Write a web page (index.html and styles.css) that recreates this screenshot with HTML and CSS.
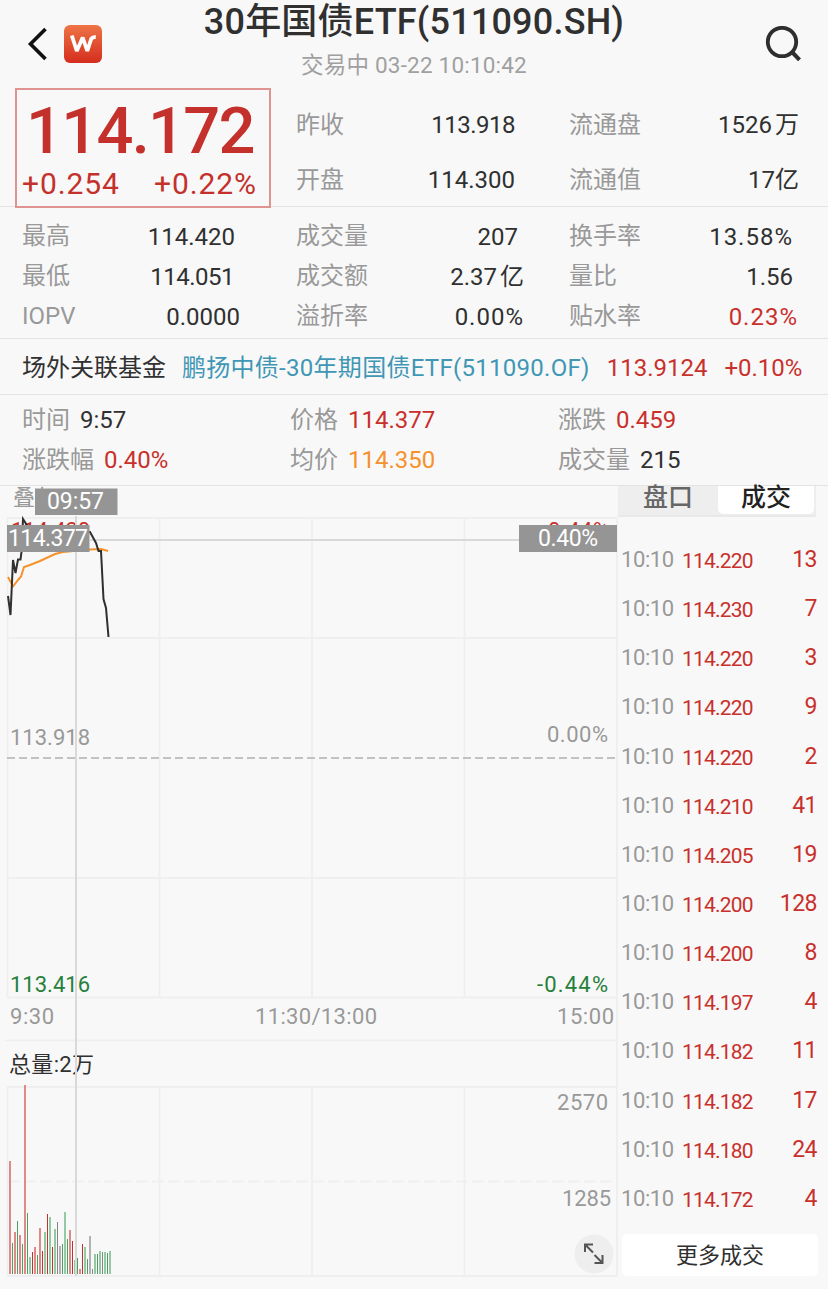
FILE: index.html
```html
<!DOCTYPE html>
<html lang="zh-CN">
<head>
    <meta charset="UTF-8">
    <meta name="viewport" content="width=device-width, initial-scale=1.0">
    <title>30年国债ETF(511090.SH)</title>
    <link rel="stylesheet" href="styles.css">
</head>
<body>
    <header class="header">
        <div class="header-left">
            <svg width="20" height="34" viewBox="0 0 20 34"><path d="M18.500 2 3.500 17l15 15" fill="none" stroke="#111" stroke-width="3.600"/></svg>
            <svg width="38" height="38" viewBox="0 0 38 38">
                <defs>
                    <linearGradient id="logo-bg" x1="0" y1="0" x2="0" y2="1">
                        <stop offset="0" stop-color="#ee7446"/>
                        <stop offset="1" stop-color="#d42d1e"/>
                    </linearGradient>
                </defs>
                <rect width="38" height="38" rx="6" fill="url(#logo-bg)"/>
                <path d="M7.800 10.500 12.800 26 18.700 12.500 23.300 26 27 14.500Q27.900 12 31.800 12.200" fill="none" stroke="#fff" stroke-width="3.800" stroke-linejoin="bevel"/>
            </svg>
        </div>
        <div class="header-title">
            <h1>30年国债ETF(511090.SH)</h1>
            <p>交易中 03-22 10:10:42</p>
        </div>
        <svg class="search" width="40" height="40" viewBox="0 0 40 40"><circle cx="18" cy="16" r="14.200" fill="none" stroke="#2e2e2e" stroke-width="3.800"/><path d="m28 26 7.500 7.800" stroke="#2e2e2e" stroke-width="4"/></svg>
    </header>

    <section class="summary">
        <div class="price-box">
            <div class="price">114.172</div>
            <div class="change"><span>+0.254</span><span>+0.22%</span></div>
        </div>
        <div class="quotes">
            <span class="label">昨收</span><span class="value tight">113.918</span>
            <span class="label">流通盘</span><span class="value">1526<i>万</i></span>
            <span class="label">开盘</span><span class="value">114.300</span>
            <span class="label">流通值</span><span class="value">17亿</span>
        </div>
    </section>

    <section class="stats">
        <span class="label">最高</span><span class="value in-5">114.420</span>
        <span class="label">成交量</span><span class="value in-6">207</span>
        <span class="label">换手率</span><span class="value in-5 wide">13.58%</span>
        <span class="label">最低</span><span class="value in-6 tight">114.051</span>
        <span class="label">成交额</span><span class="value">2.37<i>亿</i></span>
        <span class="label">量比</span><span class="value in-5">1.56</span>
        <span class="label">IOPV</span><span class="value">0.0000</span>
        <span class="label">溢折率</span><span class="value wide">0.00%</span>
        <span class="label">贴水率</span><span class="value wide red">0.23%</span>
    </section>

    <section class="fund">
        <span>场外关联基金</span>
        <a class="fund-name">鹏扬中债-30年期国债ETF(511090.OF)</a>
        <span class="red">113.9124</span>
        <span class="red">+0.10%</span>
    </section>

    <section class="detail">
        <div><span class="label">时间</span><span>9:57</span></div>
        <div><span class="label">价格</span><span class="red">114.377</span></div>
        <div><span class="label">涨跌</span><span class="red">0.459</span></div>
        <div><span class="label">涨跌幅</span><span class="red">0.40%</span></div>
        <div><span class="label">均价</span><span class="orange">114.350</span></div>
        <div><span class="label">成交量</span><span>215</span></div>
    </section>

    <main class="main">
        <svg class="chart" width="618" height="803" viewBox="0 486 618 803">
            <!-- grid -->
            <g class="grid">
                <path d="M7.500 517V997M617 517V1276M7.500 1087V1276M5 1040.500H617"/>
                <path d="M7 518H617M7 638H617M7 878H617M7 997.500H617M159.500 518V997M312 518V997M464.500 518V997"/>
                <path d="M7 1087H617M7 1276H617M159.500 1087V1276M312 1087V1276M464.500 1087V1276"/>
                <path d="M8 1181.500H617" stroke-dasharray="12 4"/>
            </g>
            <path d="M7 758H617" stroke="#c2c2c2" stroke-width="2" stroke-dasharray="8 4"/>

            <g class="axis">
                <text x="13" y="505" textLength="46">叠加</text>
                <text class="red" x="11" y="538" textLength="79">114.420</text>
                <text class="red" x="548" y="538" textLength="61">0.44%</text>
                <text x="10" y="745" textLength="80">113.918</text>
                <text x="547" y="742" textLength="61">0.00%</text>
                <text class="green" x="10" y="992" textLength="80">113.416</text>
                <text class="green" x="537" y="992" textLength="71">-0.44%</text>
                <text x="10" y="1024" textLength="44">9:30</text>
                <text x="255" y="1024" textLength="122">11:30/13:00</text>
                <text x="557" y="1024" textLength="57">15:00</text>
                <text class="dark" x="9" y="1072" textLength="85">总量:2万</text>
                <text x="557" y="1110" textLength="51">2570</text>
                <text x="562" y="1206" textLength="49">1285</text>
            </g>

            <g id="volume"></g>

            <!-- crosshair -->
            <path d="M76 516V1276" stroke="#d9d9d9" stroke-width="2"/>
            <path d="M90 540H519" stroke="#d9d9d9" stroke-width="2"/>

            <!-- average and price lines -->
            <path d="M8 577 13 586.500 18 580 21 576.500 24 567 30 565 40 561 55 554 63 552 90 549.500 101 549 108 551" fill="none" stroke="#f5922b" stroke-width="2"/>
            <path d="M8 596 10.500 615 13 560 15.500 573 18 559.500H20.500L21.500 552 23 519 30 530 50 534 75 531 90 532 96 543 98.500 551H101L103.500 599 106 608 108.500 637" fill="none" stroke="#303030" stroke-width="2"/>

            <g class="tags">
                <rect x="35" y="488.500" width="82.500" height="26.500"/>
                <rect x="7" y="525" width="82.500" height="27"/>
                <rect x="519" y="525" width="98" height="27"/>
                <text x="47" y="509" textLength="57">09:57</text>
                <text x="8" y="546" textLength="80">114.377</text>
                <text x="538" y="546" textLength="60">0.40%</text>
            </g>

            <!-- full screen -->
            <circle cx="594" cy="1254" r="19.500" fill="#eee"/>
            <path d="M585 1252v-7.500h8M585 1244.500l8 8M602.500 1255v8h-8M602.500 1263l-8-8" fill="none" stroke="#555" stroke-width="2"/>
        </svg>

        <aside class="side">
            <div class="tabs"><span>盘口</span><span class="active">成交</span></div>
            <div class="trades">
                <div><span>10:10</span><b>114.220</b><em>13</em></div>
                <div><span>10:10</span><b>114.230</b><em>7</em></div>
                <div><span>10:10</span><b>114.220</b><em>3</em></div>
                <div><span>10:10</span><b>114.220</b><em>9</em></div>
                <div><span>10:10</span><b>114.220</b><em>2</em></div>
                <div><span>10:10</span><b>114.210</b><em>41</em></div>
                <div><span>10:10</span><b>114.205</b><em>19</em></div>
                <div><span>10:10</span><b>114.200</b><em>128</em></div>
                <div><span>10:10</span><b>114.200</b><em>8</em></div>
                <div><span>10:10</span><b>114.197</b><em>4</em></div>
                <div><span>10:10</span><b>114.182</b><em>11</em></div>
                <div><span>10:10</span><b>114.182</b><em>17</em></div>
                <div><span>10:10</span><b>114.180</b><em>24</em></div>
                <div><span>10:10</span><b>114.172</b><em>4</em></div>
            </div>
            <button class="more">更多成交</button>
        </aside>
    </main>

    <script>
        // r = up, g = down, n = flat
        const volumes = 'r113 g31 r42 g53 r39 g30 r189 g61 g17 r22 r27 g19 r46 r23 g42 r60 g57 r27 g45 n52 n28 g30 g62 g35 r44 r33 g14 g16 r5 r30 g27 g15 n38 n5 g20 g20 g23 n22 g22 g21 g23'.split(' ');
        const colors = {
            r: ['#df8a87', '#c5312c'],
            g: ['#93caa4', '#4c9e62'],
            n: ['#b2b2b2', '#858585']
        };
        const group = document.getElementById('volume');

        volumes.forEach((item, i) => {
            const bar = document.createElementNS('http://www.w3.org/2000/svg', 'rect');
            const height = Number(item.slice(1));
            bar.setAttribute('x', 9 + Math.ceil(i * 2.5));
            bar.setAttribute('y', 1274 - height);
            bar.setAttribute('width', i % 2 ? 1 : 2);
            bar.setAttribute('height', height);
            bar.setAttribute('fill', colors[item[0]][i % 2]);
            group.appendChild(bar);
        });
    </script>
</body>
</html>
```
FILE: styles.css
```css
* {
    box-sizing: border-box;
}
body {
    margin: 0;
    width: 828px;
    height: 1289px;
    overflow: hidden;
    background: #f8f8f8;
    color: #303030;
    font-family: Roboto, "Noto Sans CJK SC", sans-serif;
    font-size: 24px;
}
h1, p {
    margin: 0;
}
i, em {
    font-style: normal;
}
.label {
    color: #999;
}
.red {
    color: #c9302c;
}
.orange {
    color: #f5922b;
}
.header {
    display: grid;
    grid-template-columns: 120px 1fr 120px;
    height: 88px;
}
.header-left {
    display: flex;
    align-items: center;
    gap: 17px;
    padding-left: 27px;
}
.header-title {
    text-align: center;
}
.header-title h1 {
    font-size: 36px;
    font-weight: 500;
    line-height: 44px;
    letter-spacing: 0.2px;
    white-space: nowrap;
}
.header-title p {
    color: #a0a0a0;
    font-size: 22.5px;
    line-height: 42px;
    letter-spacing: 0.2px;
}
.search {
    margin: 26px 0 0 56px;
}
.summary {
    display: flex;
    height: 119px;
    padding-left: 15px;
    border-bottom: 1px solid #e3e3e3;
}
.price-box {
    width: 256px;
    height: 120px;
    border: 2px solid #e09492;
    color: #c4302b;
}
.price {
    padding-left: 9px;
    font-size: 65px;
    font-weight: 500;
    line-height: 82px;
    letter-spacing: -1.7px;
}
.change {
    display: flex;
    justify-content: space-between;
    padding: 0 12px 0 5px;
    font-size: 30px;
    line-height: 24px;
    letter-spacing: 0.9px;
}
.quotes {
    display: grid;
    grid-template-columns: 100px 119px 154px 130px;
    grid-template-rows: 55px 55px;
    padding: 9px 0 0 25px;
    line-height: 56px;
}
.quotes .label:nth-of-type(4n + 3) {
    padding-left: 54px;
}
.value {
    text-align: right;
}
.value i {
    margin-left: 3px;
}
.tight {
    letter-spacing: -0.5px;
}
.wide {
    letter-spacing: 1px;
}
.stats {
    display: grid;
    grid-template-columns: 117px 101px 156px 128px 145px 129px;
    grid-template-rows: repeat(3, 40px);
    height: 132px;
    padding: 9px 0 0 22px;
    border-bottom: 1px solid #e3e3e3;
    line-height: 40px;
}
.stats .value {
    line-height: 42px;
}
.stats .label:nth-of-type(6n + 3) {
    padding-left: 56px;
}
.stats .label:nth-of-type(6n + 5) {
    padding-left: 45px;
}
.in-5 {
    padding-right: 5px;
}
.in-6 {
    padding-right: 6px;
}
.fund {
    display: flex;
    gap: 17px;
    height: 56px;
    padding-left: 22px;
    border-bottom: 1px solid #e3e3e3;
    line-height: 58px;
    white-space: nowrap;
}
.fund-name {
    margin-left: -1px;
    color: #3f97b5;
    letter-spacing: 0.28px;
}
.detail {
    display: grid;
    grid-template-columns: 268px 268px 1fr;
    grid-template-rows: 40px 40px;
    height: 91px;
    padding: 5px 0 0 22px;
    border-bottom: 1px solid #e3e3e3;
    line-height: 40px;
}
.detail .label {
    margin-right: 10px;
}
.main {
    display: flex;
}
.chart {
    display: block;
}
.grid {
    fill: none;
    stroke: #efefef;
    stroke-width: 2;
}
.axis text {
    font-size: 22px;
    fill: #999;
}
.axis .red {
    fill: #c9302c;
}
.axis .green {
    fill: #25803a;
}
.axis .dark {
    fill: #303030;
}
.tags rect {
    fill: #959595;
}
.tags text {
    fill: #fff;
    font-size: 23px;
}
.side {
    width: 210px;
}
.tabs {
    display: flex;
    width: 198px;
    height: 31px;
    padding-right: 2px;
    border-bottom: 2px solid #e9e9e9;
    background: #eee;
    color: #666;
    font-size: 25px;
    font-weight: 500;
    line-height: 23px;
    text-align: center;
}
.tabs span {
    width: 100px;
    height: 28px;
}
.tabs .active {
    width: 96px;
    border-radius: 0 0 5px 5px;
    background: #fff;
    color: #222;
}
.trades {
    height: 706px;
    padding: 18px 11px 0 3px;
}
.trades div {
    display: flex;
    height: 49.15px;
    line-height: 50px;
    color: #c9302c;
}
.trades span {
    width: 61px;
    color: #999;
    font-size: 22px;
    letter-spacing: -0.4px;
}
.trades b {
    font-size: 21px;
    font-weight: 400;
    line-height: 52px;
    letter-spacing: -0.8px;
}
.trades em {
    margin-left: auto;
    font-size: 23px;
    letter-spacing: -0.5px;
}
.more {
    width: 196px;
    height: 42px;
    margin: 11px 0 0 4px;
    padding: 0 0 5px;
    border: 0;
    border-radius: 5px;
    background: #fff;
    color: #303030;
    font-family: inherit;
    font-size: 22px;
}
```
